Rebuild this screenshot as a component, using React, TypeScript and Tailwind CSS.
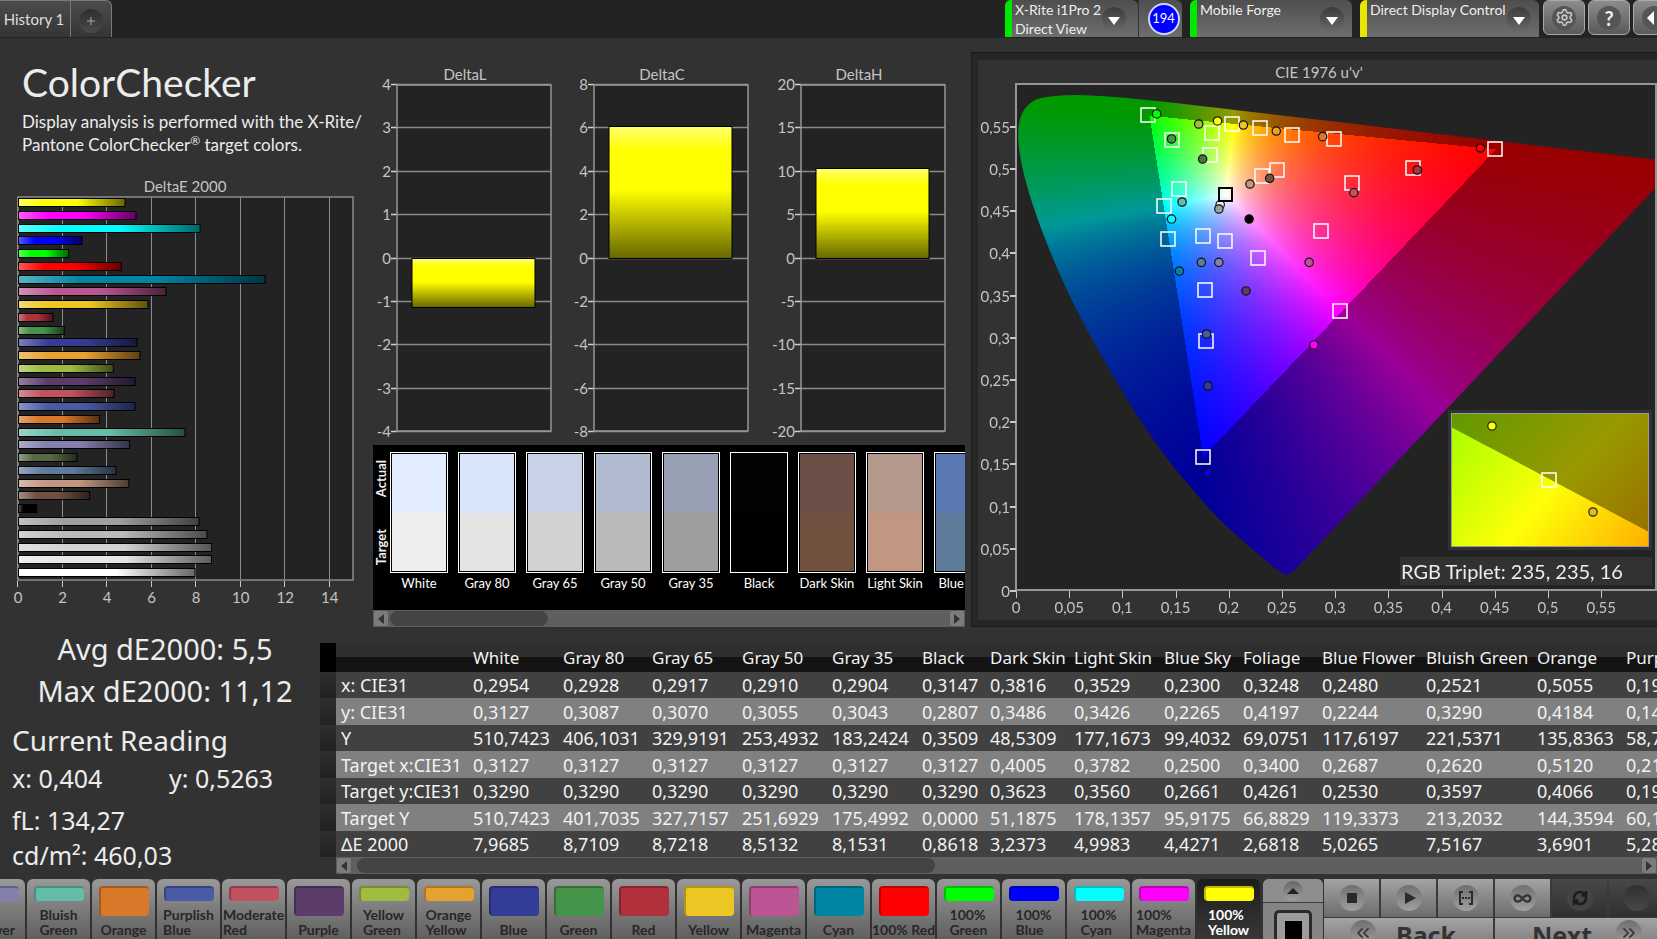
import { useEffect, useRef } from "react";
import {
  ChevronsLeft,
  ChevronsRight,
  Infinity as InfinityIcon,
  RefreshCw,
  Settings,
} from "lucide-react";

type Patch = { name: string; color: string; lines?: string[] };

const palette: Patch[] = [
  { name: "Blue Flower", color: "#8480ae", lines: ["Blue", "Flower"] },
  { name: "Bluish Green", color: "#64bda9", lines: ["Bluish", "Green"] },
  { name: "Orange", color: "#d87828" },
  { name: "Purplish Blue", color: "#4a5ba6", lines: ["Purplish", "Blue"] },
  { name: "Moderate Red", color: "#c25260", lines: ["Moderate", "Red"] },
  { name: "Purple", color: "#5b3c6b" },
  { name: "Yellow Green", color: "#9fbc40", lines: ["Yellow", "Green"] },
  { name: "Orange Yellow", color: "#e6a12e", lines: ["Orange", "Yellow"] },
  { name: "Blue", color: "#343d96" },
  { name: "Green", color: "#469449" },
  { name: "Red", color: "#b0303b" },
  { name: "Yellow", color: "#ecc622" },
  { name: "Magenta", color: "#bb5594" },
  { name: "Cyan", color: "#0086a5" },
  { name: "100% Red", color: "#ff0000" },
  { name: "100% Green", color: "#00ff00", lines: ["100%", "Green"] },
  { name: "100% Blue", color: "#0000ff", lines: ["100%", "Blue"] },
  { name: "100% Cyan", color: "#00ffff", lines: ["100%", "Cyan"] },
  { name: "100% Magenta", color: "#ff00ff", lines: ["100%", "Magenta"] },
  { name: "100% Yellow", color: "#ffff00", lines: ["100%", "Yellow"] },
];

const deltaE: [string, number][] = [
  ["#ffff00", 4.83],
  ["#ff00ff", 5.32],
  ["#00ffff", 8.2],
  ["#0000ff", 2.9],
  ["#00ff00", 2.3],
  ["#ff0000", 4.66],
  ["#0086a5", 11.12],
  ["#bb5594", 6.67],
  ["#ecc622", 5.86],
  ["#b0303b", 1.6],
  ["#469449", 2.1],
  ["#343d96", 5.37],
  ["#e6a12e", 5.5],
  ["#9fbc40", 4.3],
  ["#5b3c6b", 5.28],
  ["#c25260", 4.33],
  ["#4a5ba6", 5.28],
  ["#d87828", 3.69],
  ["#64bda9", 7.52],
  ["#8480ae", 5.03],
  ["#566b44", 2.68],
  ["#5e7b9c", 4.43],
  ["#c29682", 5],
  ["#735142", 3.24],
  ["#000000", 0.86],
  ["#a0a0a0", 8.15],
  ["#bababa", 8.51],
  ["#d2d2d2", 8.72],
  ["#e6e6e6", 8.71],
  ["#ffffff", 7.97],
];

const comparison = [
  { name: "White", actual: "#e1edff", target: "#eeeeee" },
  { name: "Gray 80", actual: "#d8e5fb", target: "#e4e4e4" },
  { name: "Gray 65", actual: "#c7d2e6", target: "#d2d2d2" },
  { name: "Gray 50", actual: "#b0bbd0", target: "#bababa" },
  { name: "Gray 35", actual: "#98a1b3", target: "#9e9e9e" },
  { name: "Black", actual: "#030303", target: "#000000" },
  { name: "Dark Skin", actual: "#6c5047", target: "#725141" },
  { name: "Light Skin", actual: "#b6998d", target: "#c29680" },
  { name: "Blue Sky", actual: "#5a78b4", target: "#5e7b9c" },
];

const columns = [
  "White",
  "Gray 80",
  "Gray 65",
  "Gray 50",
  "Gray 35",
  "Black",
  "Dark Skin",
  "Light Skin",
  "Blue Sky",
  "Foliage",
  "Blue Flower",
  "Bluish Green",
  "Orange",
  "Purplish Blue",
];

const columnWidths = [16, 132, 90, 89, 90, 90, 90, 68, 84, 90, 79, 79, 104, 111, 89, 120];

const rows: [string, string[]][] = [
  ["x: CIE31", ["0,2954", "0,2928", "0,2917", "0,2910", "0,2904", "0,3147", "0,3816", "0,3529", "0,2300", "0,3248", "0,2480", "0,2521", "0,5055", "0,1986"]],
  ["y: CIE31", ["0,3127", "0,3087", "0,3070", "0,3055", "0,3043", "0,2807", "0,3486", "0,3426", "0,2265", "0,4197", "0,2244", "0,3290", "0,4184", "0,1432"]],
  ["Y", ["510,7423", "406,1031", "329,9191", "253,4932", "183,2424", "0,3509", "48,5309", "177,1673", "99,4032", "69,0751", "117,6197", "221,5371", "135,8363", "58,7310"]],
  ["Target x:CIE31", ["0,3127", "0,3127", "0,3127", "0,3127", "0,3127", "0,3127", "0,4005", "0,3782", "0,2500", "0,3400", "0,2687", "0,2620", "0,5120", "0,2170"]],
  ["Target y:CIE31", ["0,3290", "0,3290", "0,3290", "0,3290", "0,3290", "0,3290", "0,3623", "0,3560", "0,2661", "0,4261", "0,2530", "0,3597", "0,4066", "0,1920"]],
  ["Target Y", ["510,7423", "401,7035", "327,7157", "251,6929", "175,4992", "0,0000", "51,1875", "178,1357", "95,9175", "66,8829", "119,3373", "213,2032", "144,3594", "60,1420"]],
  ["ΔE 2000", ["7,9685", "8,7109", "8,7218", "8,5132", "8,1531", "0,8618", "3,2373", "4,9983", "4,4271", "2,6818", "5,0265", "7,5167", "3,6901", "5,2810"]],
];

// u', v' of the reference patches
const targets: [number, number][] = [
  [0.1244, 0.5636], [0.1466, 0.534], [0.1845, 0.543], [0.2034, 0.5533],
  [0.2289, 0.5486], [0.259, 0.5403], [0.2985, 0.5352], [0.4505, 0.5237],
  [0.1828, 0.517], [0.245, 0.4988], [0.2314, 0.4921], [0.3735, 0.5008],
  [0.3162, 0.4838], [0.1536, 0.4767], [0.1388, 0.4558], [0.1433, 0.4175],
  [0.1754, 0.4206], [0.196, 0.4143], [0.2277, 0.3942], [0.2866, 0.4262],
  [0.1779, 0.3562], [0.3047, 0.3314], [0.1783, 0.2962], [0.1754, 0.1584],
];

const measured: [number, number, string][] = [
  [0.1322, 0.5652, "#00ff00"], [0.1462, 0.5356, "#469449"],
  [0.1717, 0.5533, "#9fbc40"], [0.1894, 0.5569, "#ffff00"],
  [0.2137, 0.5521, "#ecc622"], [0.2446, 0.545, "#e6a12e"],
  [0.2882, 0.5383, "#d87828"], [0.4365, 0.5249, "#ff0000"],
  [0.1754, 0.5118, "#566b44"], [0.2199, 0.4822, "#c29680"],
  [0.2384, 0.4889, "#735142"], [0.3772, 0.4988, "#b0303b"],
  [0.3175, 0.4719, "#c25260"], [0.1561, 0.4609, "#64bda9"],
  [0.1919, 0.4577, "#eeeeee"], [0.1907, 0.4526, "#9e9e9e"],
  [0.1462, 0.4407, "#00ffff"], [0.2191, 0.4407, "#000000"],
  [0.1536, 0.3791, "#0086a5"], [0.1742, 0.3894, "#5e7b9c"],
  [0.1907, 0.3894, "#8480ae"], [0.2755, 0.3894, "#bb5594"],
  [0.2162, 0.3555, "#5b3c6b"], [0.1791, 0.3045, "#4a5ba6"],
  [0.28, 0.2915, "#ff00ff"], [0.1804, 0.2429, "#343d96"],
  [0.1804, 0.1398, "#0000ff"],
];

// spectral locus, 400 nm to 700 nm
const locus: [number, number][] = [
  [0.2557, 0.0159], [0.2461, 0.0226], [0.2161, 0.0549], [0.1877, 0.0871],
  [0.1441, 0.151], [0.1147, 0.2044], [0.0828, 0.2708], [0.0521, 0.3427],
  [0.0282, 0.4117], [0.0119, 0.4699], [0.0035, 0.5131], [0.0014, 0.5432],
  [0.0046, 0.5638], [0.0123, 0.577], [0.0231, 0.5837], [0.0501, 0.5868],
  [0.0792, 0.5856], [0.1127, 0.5821], [0.1531, 0.5766], [0.2026, 0.5694],
  [0.2623, 0.5604], [0.3315, 0.5501], [0.4035, 0.5393], [0.5203, 0.5219],
  [0.583, 0.5125], [0.6234, 0.5065],
];

const GAMUT_W = 640;
const GAMUT_H = 506;
const U_SCALE = 1064;
const V_SCALE = 844;

const comma = (n: number) => String(Number(n.toFixed(2))).replace(".", ",");

function uvToRgb(u: number, v: number) {
  const d = 6 * u - 16 * v + 12;
  const x = (9 * u) / d;
  const y = (4 * v) / d;
  const z = 1 - x - y;
  const rgb = [
    3.2406 * x - 1.5372 * y - 0.4986 * z,
    -0.9689 * x + 1.8758 * y + 0.0415 * z,
    0.0557 * x - 0.204 * y + 1.057 * z,
  ];
  const inside = Math.min(...rgb) >= 0;
  const max = Math.max(...rgb);
  const level = inside ? 255 : 153;
  return rgb.map((c) => (Math.max(c, 0) / max) * level);
}

function GamutField() {
  const ref = useRef<HTMLCanvasElement>(null);

  useEffect(() => {
    const ctx = ref.current?.getContext("2d");
    if (!ctx) return;
    const field = ctx.createImageData(GAMUT_W, GAMUT_H);
    for (let py = 0; py < GAMUT_H; py++) {
      for (let px = 0; px < GAMUT_W; px++) {
        const [r, g, b] = uvToRgb(px / U_SCALE, (GAMUT_H - py) / V_SCALE);
        const i = (py * GAMUT_W + px) * 4;
        field.data[i] = r;
        field.data[i + 1] = g;
        field.data[i + 2] = b;
        field.data[i + 3] = 255;
      }
    }
    ctx.putImageData(field, 0, 0);

    // keep only what lies inside the locus, with the corners rounded off
    const points = locus.map(([u, v]) => [u * U_SCALE, GAMUT_H - v * V_SCALE]);
    ctx.beginPath();
    ctx.moveTo(points[0][0] + 8, points[0][1] - 8);
    for (let i = 0; i < points.length - 1; i++) {
      const [ax, ay] = points[i];
      const [bx, by] = points[i + 1];
      ctx.quadraticCurveTo(ax, ay, (ax + bx) / 2, (ay + by) / 2);
    }
    const [endX, endY] = points[points.length - 1];
    ctx.lineTo(endX, endY);
    ctx.closePath();
    ctx.globalCompositeOperation = "destination-in";
    ctx.fill();
  }, []);

  return <canvas ref={ref} width={GAMUT_W} height={GAMUT_H} className="block" />;
}

function GamutChart() {
  const x = (u: number) => 45 + u * U_SCALE;
  const y = (v: number) => 539 - v * V_SCALE;
  const ticks = Array.from({ length: 12 }, (_, i) => i * 0.05);

  return (
    <svg viewBox="0 0 686 575" className="block w-full" role="img" aria-label="CIE 1976 u'v'">
      <defs>
        <linearGradient id="inset-in" gradientUnits="userSpaceOnUse" x1="470" y1="390" x2="655" y2="545">
          <stop offset="0" stopColor="#a8ff00" />
          <stop offset="0.48" stopColor="#ffff08" />
          <stop offset="1" stopColor="#ffa400" />
        </linearGradient>
        <linearGradient id="inset-out" gradientUnits="userSpaceOnUse" x1="500" y1="330" x2="690" y2="500">
          <stop offset="0" stopColor="#5f9900" />
          <stop offset="0.53" stopColor="#999900" />
          <stop offset="1" stopColor="#996800" />
        </linearGradient>
      </defs>
      <rect width="686" height="575" fill="#1b1b1b" />
      <rect x="1" y="1" width="685" height="573" fill="#262626" />
      <rect x="7" y="8" width="679" height="560" fill="#323232" />
      <text x="348" y="26" textAnchor="middle" fontSize="15" fill="#c4c4c4">CIE 1976 u'v'</text>
      <rect x="45" y="32" width="640" height="506" fill="#232323" />
      <foreignObject x="45" y="32" width="640" height="506">
        <GamutField />
      </foreignObject>
      <path d="M45 32H685V538H45Z" fill="none" stroke="#969696" strokeWidth="2" />
      {ticks.map((t) => (
        <g key={t} stroke="#c8c8c8">
          <path d={`M39 ${Math.round(y(t))}h6`} strokeWidth="2" />
          <path d={`M${Math.round(x(t)) + 0.5} 539v7`} />
          <g fill="#c4c4c4" fontSize="15" stroke="none">
            <text x="39" y={y(t) + 6} textAnchor="end">{comma(t)}</text>
            <text x={x(t)} y="561" textAnchor="middle">{comma(t)}</text>
          </g>
        </g>
      ))}
      {targets.map(([u, v]) => (
        <rect key={`${u}-${v}`} x={Math.round(x(u)) - 7} y={Math.round(y(v)) - 7} width="14" height="14" fill="none" stroke="#fff" strokeWidth="1.5" />
      ))}
      {measured.map(([u, v, color]) => (
        <circle key={`${u}-${v}`} cx={x(u)} cy={y(v)} r="4.2" fill={color} stroke="#111" strokeWidth="1.2" />
      ))}
      <rect x="248" y="136" width="13" height="13" fill="none" stroke="#000" strokeWidth="2" />

      <rect x="477" y="358" width="204" height="140" fill="#323232" />
      <rect x="480" y="361" width="198" height="134" fill="url(#inset-out)" />
      <path d="M480 375L678 480V495H480Z" fill="url(#inset-in)" />
      <rect x="480.5" y="361.5" width="197" height="133" fill="none" stroke="#9a9a9a" />
      <rect x="571" y="421" width="14" height="14" fill="none" stroke="#fff" strokeWidth="1.5" />
      <circle cx="521" cy="374" r="4.2" fill="#ffff00" stroke="#222" strokeWidth="1.2" />
      <circle cx="622" cy="460" r="4.2" fill="#dcbc20" stroke="#222" strokeWidth="1.2" />

      <rect x="429" y="505" width="252" height="28" fill="#323232" />
      <text x="430" y="527" fontSize="20" fill="#ececec">RGB Triplet: 235, 235, 16</text>
    </svg>
  );
}

function DeltaEChart() {
  const x = (v: number) => 18 + v * 22.27;
  return (
    <svg viewBox="0 0 366 454" className="block w-full" role="img" aria-label="DeltaE 2000">
      <defs>
        <linearGradient id="shade">
          <stop offset="0" stopColor="#fff" stopOpacity="0.35" />
          <stop offset="0.25" stopColor="#fff" stopOpacity="0" />
          <stop offset="0.55" stopColor="#000" stopOpacity="0" />
          <stop offset="1" stopColor="#000" stopOpacity="0.6" />
        </linearGradient>
      </defs>
      <text x="185" y="36" textAnchor="middle" fontSize="15" fill="#c4c4c4">DeltaE 2000</text>
      <rect x="18" y="41" width="335" height="383" fill="#232323" stroke="#8c8c8c" strokeWidth="1.5" />
      {[0, 2, 4, 6, 8, 10, 12, 14].map((t) => (
        <g key={t}>
          <path d={`M${Math.round(x(t)) - 0.5} 41v383`} stroke="#8c8c8c" />
          <path d={`M${Math.round(x(t)) - 0.5} 425v6`} stroke="#c8c8c8" />
          <text x={x(t)} y="447" textAnchor="middle" fontSize="15" fill="#c4c4c4">{t}</text>
        </g>
      ))}
      {deltaE.map(([color, value], i) => {
        const y = 42.5 + Math.round(i * 12.76);
        return (
          <g key={i}>
            <rect x="18.5" y={y} width={x(value) - 19} height="8" fill={color} />
            <rect x="18.5" y={y} width={x(value) - 19} height="8" fill="url(#shade)" stroke="#000" />
          </g>
        );
      })}
    </svg>
  );
}

type DeltaChartProps = {
  title: string;
  max: number;
  value: number;
  left: number;
};

function DeltaChart({ title, max, value, left }: DeltaChartProps) {
  const ticks = Array.from({ length: 9 }, (_, i) => max - (i * max) / 4);
  const y = (v: number) => Math.round(220.5 - (v / max) * 173.5);
  const right = 185;

  return (
    <svg viewBox="0 0 197 407" className="block w-full min-w-0 flex-1" role="img" aria-label={title}>
      <defs>
        <linearGradient id="yellow-bar" x2="0" y2="1">
          <stop offset="0" stopColor="#ffff70" />
          <stop offset="0.18" stopColor="#ffff00" />
          <stop offset="0.48" stopColor="#ffff00" />
          <stop offset="1" stopColor="#666600" />
        </linearGradient>
      </defs>
      <text x="99" y="42" textAnchor="middle" fontSize="15" fill="#c4c4c4">{title}</text>
      <rect x={left} y="47" width={right - left} height="347" fill="#232323" />
      {ticks.map((t) => (
        <g key={t}>
          <path d={`M${left} ${y(t) - 0.5}H${right}`} stroke="#8a8a8a" strokeWidth="1.5" />
          <path d={`M${left - 6} ${y(t) - 0.5}h6`} stroke="#d0d0d0" strokeWidth="1.5" />
          <text x={left - 6} y={y(t) + 5} textAnchor="end" fontSize="15" fill="#c4c4c4">{t}</text>
        </g>
      ))}
      <rect x={left} y="47" width={right - left} height="346" fill="none" stroke="#969696" strokeWidth="1.5" />
      <rect
        x={left + 15}
        y={y(Math.max(value, 0)) - 0.5}
        width={right - left - 31}
        height={y(Math.min(value, 0)) - y(Math.max(value, 0))}
        fill="url(#yellow-bar)"
        stroke="#000"
      />
    </svg>
  );
}

function ScrollBar({ thumbClass, label }: { thumbClass: string; label: string }) {
  const arrow = "flex w-4 items-center justify-center rounded-[3px] border border-[#5c5c5c] bg-[#7c7c7c]";
  return (
    <div className="flex h-[17px] w-full justify-between bg-[#5f5f5f]">
      <button type="button" aria-label={`${label} left`} className={arrow}>
        <svg width="6" height="10"><path d="M6 0V10L0 5Z" fill="#333" /></svg>
      </button>
      <div className="flex flex-1 px-px py-px">
        <div className={`rounded-full bg-[#444] ${thumbClass}`} />
      </div>
      <button type="button" aria-label={`${label} right`} className={arrow}>
        <svg width="6" height="10"><path d="M0 0V10L6 5Z" fill="#333" /></svg>
      </button>
    </div>
  );
}

function DropArrow() {
  return (
    <span className="flex h-6 w-6 shrink-0 items-center justify-center rounded-full bg-linear-to-b from-[#3c3c3c] to-[#686868]">
      <svg width="12" height="8" className="mt-1"><path d="M0 0H12L6 8Z" fill="#fff" /></svg>
    </span>
  );
}

type DeviceProps = { lines: string[]; strip: string; className: string };

function Device({ lines, strip, className }: DeviceProps) {
  return (
    <button type="button" className={`flex h-[37px] overflow-hidden rounded-t-md bg-linear-to-b from-[#4e4e4e] to-[#6e6e6e] text-left ${className}`}>
      <span className={`h-full w-[7px] shrink-0 ${strip}`} />
      <span className="flex-1 pl-[3px] text-sm leading-[19px] whitespace-nowrap text-[#efefef]">
        {lines.map((line) => (
          <span key={line} className="block">{line}</span>
        ))}
      </span>
      <span className="pt-[7px] pr-2">
        <DropArrow />
      </span>
    </button>
  );
}

function TopBar() {
  const square = "flex h-[35px] shrink-0 items-center justify-center rounded-md border border-[#a8a8a8] bg-linear-to-b from-[#8c8c8c] to-[#5a5a5a]";
  const disc = "flex h-6 w-6 items-center justify-center rounded-full bg-[#555]";
  return (
    <header className="flex h-[38px] justify-between bg-[#232323]">
      <div className="flex h-[37px] rounded-tr-md border-t border-r border-[#7a7a7a] bg-linear-to-b from-[#4c4c4c] to-[#353535]">
        <button type="button" className="w-[71px] border-r border-[#777] pr-[2px] text-[15px] text-[#dedede]">History 1</button>
        <button type="button" aria-label="Add history" className="flex w-10 items-center justify-center">
          <span className="mt-1 flex h-6 w-6 items-center justify-center rounded-full bg-linear-to-b from-[#2e2e2e] to-[#4a4a4a]">
            <svg width="8" height="8"><path d="M4 0V8M0 4H8" stroke="#a8a8a8" /></svg>
          </span>
        </button>
      </div>
      <div className="flex w-[652px] shrink-0 overflow-hidden">
        <Device lines={["X-Rite i1Pro 2", "Direct View"]} strip="bg-[#00e800]" className="w-[133px] shrink-0 pr-1" />
        <div className="flex h-[37px] w-11 shrink-0 items-center justify-center rounded-tr-md border-l border-[#333] bg-linear-to-b from-[#4e4e4e] to-[#6e6e6e] pl-[6px]">
          <span className="flex h-8 w-8 items-center justify-center rounded-full border-2 border-[#cfd4ff] bg-[#0000ff] text-[13px] text-white">194</span>
        </div>
        <div className="ml-2 flex shrink-0 gap-2">
          <Device lines={["Mobile Forge"]} strip="bg-[#00e800]" className="w-[162px]" />
          <Device lines={["Direct Display Control"]} strip="bg-[#e6e600]" className="w-[179px]" />
        </div>
        <div className="ml-1 flex gap-[3px]">
          <button type="button" aria-label="Settings" className={`${square} w-[42px]`}>
            <span className={disc}><Settings size={19} strokeWidth={2} color="#c8c8c8" /></span>
          </button>
          <button type="button" aria-label="Help" className={`${square} w-[42px]`}>
            <span className={`${disc} text-xl font-bold text-[#f0f0f0]`}>?</span>
          </button>
          <button type="button" aria-label="Collapse" className={`${square} w-[42px]`}>
            <span className={disc}>
              <svg width="24" height="14"><path d="M12 0V14L5 7Z" fill="#fff" /></svg>
            </span>
          </button>
        </div>
      </div>
    </header>
  );
}

function Comparison() {
  return (
    <div className="ml-[7px]">
      <div className="flex h-[165px] overflow-hidden bg-black pt-[7px]">
        <div className="flex h-[121px] w-[17px] shrink-0 flex-col justify-between py-2 text-[13px] leading-4 font-bold text-[#f0f0f0]">
          <span className="rotate-180 [writing-mode:vertical-rl]">Actual</span>
          <span className="rotate-180 [writing-mode:vertical-rl]">Target</span>
        </div>
        <div className="flex min-w-0 flex-1 gap-[10px] overflow-hidden">
          {comparison.map((c) => (
            <div key={c.name} className="w-[58px] shrink-0">
              <div className="h-[121px] border border-white">
                <div className="flex h-full flex-col border border-black/25">
                  <div className="flex-1" style={{ backgroundColor: c.actual }} />
                  <div className="flex-1" style={{ backgroundColor: c.target }} />
                </div>
              </div>
              <div className="mt-[2px] text-center text-[13px] leading-4 whitespace-nowrap text-white">{c.name}</div>
            </div>
          ))}
        </div>
      </div>
      <ScrollBar label="Scroll swatches" thumbClass="w-[158px]" />
    </div>
  );
}

function Readings() {
  return (
    <section className="w-[320px] shrink-0 pt-px font-['Noto_Sans',sans-serif] text-[#ececec]">
      <div className="pl-[10px] text-center text-[29px] leading-[42px] whitespace-nowrap">
        <p>Avg dE2000: 5,5</p>
        <p>Max dE2000: 11,12</p>
      </div>
      <div className="pt-[7px] pl-3">
        <h2 className="text-[28px] leading-[42px]">Current Reading</h2>
        <div className="flex text-[25px] leading-[35px]">
          <p className="w-[157px]">x: 0,404</p>
          <p>y: 0,5263</p>
        </div>
        <div className="pt-[7px] text-[25px] leading-[35px]">
          <p>fL: 134,27</p>
          <p>cd/m²: 460,03</p>
        </div>
      </div>
    </section>
  );
}

function DataTable() {
  return (
    <section className="min-w-0 flex-1 overflow-hidden pt-4">
      <div className="overflow-hidden">
        <table className="w-[1421px] table-fixed border-collapse text-left font-['Noto_Sans',sans-serif] whitespace-nowrap text-[#f2f2f2]">
          <colgroup>
            {columnWidths.map((w, i) => (
              <col key={i} style={{ width: w }} />
            ))}
          </colgroup>
          <thead>
            <tr className="h-[29px] bg-linear-to-b from-[#2e2e2e] from-50% to-[#131313] to-50% text-[17px] leading-5">
              <td className="bg-black p-0" />
              <td className="p-0" />
              {columns.map((c) => (
                <th key={c} scope="col" className="p-0 pl-[5px] font-normal">{c}</th>
              ))}
            </tr>
          </thead>
          <tbody>
            {rows.map(([label, values]) => (
              <tr key={label} className="h-[26px] bg-[#414141] text-lg leading-[26px] even:h-[27px] even:bg-[#808080]">
                <td className="bg-linear-to-b from-[#2e2e2e] to-[#222] p-0" />
                <th scope="row" className="p-0 pl-[5px] font-normal">{label}</th>
                {values.map((v, i) => (
                  <td key={i} className="p-0 pl-[5px]">{v}</td>
                ))}
              </tr>
            ))}
          </tbody>
        </table>
      </div>
      <div className="pl-4">
        <ScrollBar label="Scroll table" thumbClass="ml-1 w-[578px]" />
      </div>
    </section>
  );
}

function PaletteTile({ patch, active }: { patch: Patch; active: boolean }) {
  return (
    <button
      type="button"
      className={`flex h-16 w-[63px] shrink-0 flex-col items-center justify-between rounded-t-md pt-[7px] pb-[6px] text-sm leading-[15px] font-bold whitespace-nowrap ${
        active ? "bg-linear-to-b from-[#1c1c1c] to-[#3a3a3a] text-white" : "bg-linear-to-b from-[#999] to-[#5c5c5c] text-[#272727]"
      }`}
    >
      <span
        className={`w-[50px] rounded-[4px] border-t-2 border-l-2 border-black/25 ${patch.lines ? "h-[15px]" : "h-[30px]"}`}
        style={{ backgroundColor: patch.color }}
      />
      <span className="text-left">
        {(patch.lines ?? [patch.name]).map((line) => (
          <span key={line} className="block">{line}</span>
        ))}
      </span>
    </button>
  );
}

function Transport() {
  const key = "flex h-[38px] w-[55px] shrink-0 items-center justify-center";
  const light = "bg-linear-to-b from-[#a4a4a4] to-[#6c6c6c]";
  const disc = "flex h-[26px] w-[26px] shrink-0 items-center justify-center rounded-full";
  const lightDisc = "bg-linear-to-b from-[#707070] to-[#a0a0a0]";
  const wide = "flex h-10 shrink-0 items-start pt-[2px] font-['Noto_Sans',sans-serif] text-[25px] leading-[30px] font-bold text-[#333]";

  return (
    <div className="flex w-[394px] shrink-0 overflow-hidden">
      <div className="mr-px w-[60px] shrink-0 rounded-t-md bg-[#848484]">
        <button type="button" aria-label="Expand" className="flex h-6 w-full items-center justify-center rounded-t-md border-b border-[#3c3c3c] bg-[#8e8e8e]">
          <span className="flex h-5 w-5 items-center justify-center rounded-full bg-linear-to-b from-[#666] to-[#a0a0a0]">
            <svg width="12" height="6"><path d="M0 6H12L6 0Z" fill="#222" /></svg>
          </span>
        </button>
        <button type="button" aria-label="Pattern window" className="mx-auto mt-[7px] flex h-10 w-[38px] justify-center rounded-[5px] border-[3px] border-[#2a2a2a] bg-[#9c9c9c] pt-2">
          <span className="h-5 w-[17px] bg-black" />
        </button>
      </div>
      <div className="flex shrink-0 flex-col gap-px bg-[#3a3a3a]">
        <div className="flex gap-[2px]">
          <button type="button" aria-label="Stop" className={`${key} ${light}`}>
            <span className={`${disc} ${lightDisc}`}><span className="h-[10px] w-[10px] bg-[#2a2a2a]" /></span>
          </button>
          <button type="button" aria-label="Play" className={`${key} ${light}`}>
            <span className={`${disc} ${lightDisc}`}>
              <svg width="14" height="12"><path d="M3 0V12L14 6Z" fill="#2a2a2a" /></svg>
            </span>
          </button>
          <button type="button" aria-label="Read range" className={`${key} ${light}`}>
            <span className={`${disc} ${lightDisc}`}>
              <svg width="16" height="14" fill="none" stroke="#2a2a2a" strokeWidth="2">
                <path d="M5 1H2V13H5M11 1H14V13H11M4 7h2M7 7h2M10 7h2" />
              </svg>
            </span>
          </button>
          <button type="button" aria-label="Continuous" className={`${key} ${light}`}>
            <span className={`${disc} ${lightDisc}`}><InfinityIcon size={19} strokeWidth={3} color="#333" /></span>
          </button>
          <button type="button" aria-label="Repeat" className={`${key} bg-linear-to-b from-[#484848] to-[#303030]`}>
            <span className={`${disc} bg-[#444]`}><RefreshCw size={16} strokeWidth={4} color="#1d1d1d" /></span>
          </button>
          <button type="button" aria-label="Record" className={`${key} bg-linear-to-b from-[#484848] to-[#303030]`}>
            <span className={`${disc} bg-linear-to-b from-[#303030] to-[#484848]`} />
          </button>
        </div>
        <div className="flex gap-[2px]">
          <button type="button" className={`${wide} ${light} w-[169px] gap-5 pl-[26px]`}>
            <span className={`${disc} ${lightDisc}`}><ChevronsLeft size={20} /></span>
            Back
          </button>
          <button type="button" className={`${wide} ${light} w-[169px] justify-end gap-6 pr-[22px]`}>
            Next
            <span className={`${disc} ${lightDisc}`}><ChevronsRight size={20} /></span>
          </button>
        </div>
      </div>
    </div>
  );
}

export default function App() {
  return (
    <div className="h-screen w-full overflow-hidden bg-[#323232] font-['Lato',sans-serif] text-[#ececec]">
      <TopBar />
      <main>
        <div className="flex">
          <section className="w-[366px] shrink-0 pt-5">
            <div className="pl-[22px] whitespace-nowrap">
              <h1 className="text-[39px] leading-[48px]">ColorChecker</h1>
              <p className="mt-1 text-[17px] leading-[23px]">
                Display analysis is performed with the X-Rite/
                <br />
                Pantone ColorChecker<span className="align-top text-xs leading-4">®</span> target colors.
              </p>
            </div>
            <DeltaEChart />
          </section>
          <section className="w-[599px] shrink-0">
            <div className="flex pr-2">
              <DeltaChart title="DeltaL" max={4} value={-1.14} left={31} />
              <DeltaChart title="DeltaC" max={8} value={6.05} left={31} />
              <DeltaChart title="DeltaH" max={20} value={10.35} left={41} />
            </div>
            <Comparison />
          </section>
          <section className="ml-[6px] min-w-0 flex-1 pt-[14px]">
            <GamutChart />
          </section>
        </div>
        <div className="flex">
          <Readings />
          <DataTable />
        </div>
      </main>
      <footer className="mt-[5px] flex">
        <nav aria-label="Patches" className="flex min-w-0 flex-1 justify-end gap-[2px] overflow-hidden pr-[3px]">
          {palette.map((patch) => (
            <PaletteTile key={patch.name} patch={patch} active={patch.name === "100% Yellow"} />
          ))}
        </nav>
        <Transport />
      </footer>
    </div>
  );
}
